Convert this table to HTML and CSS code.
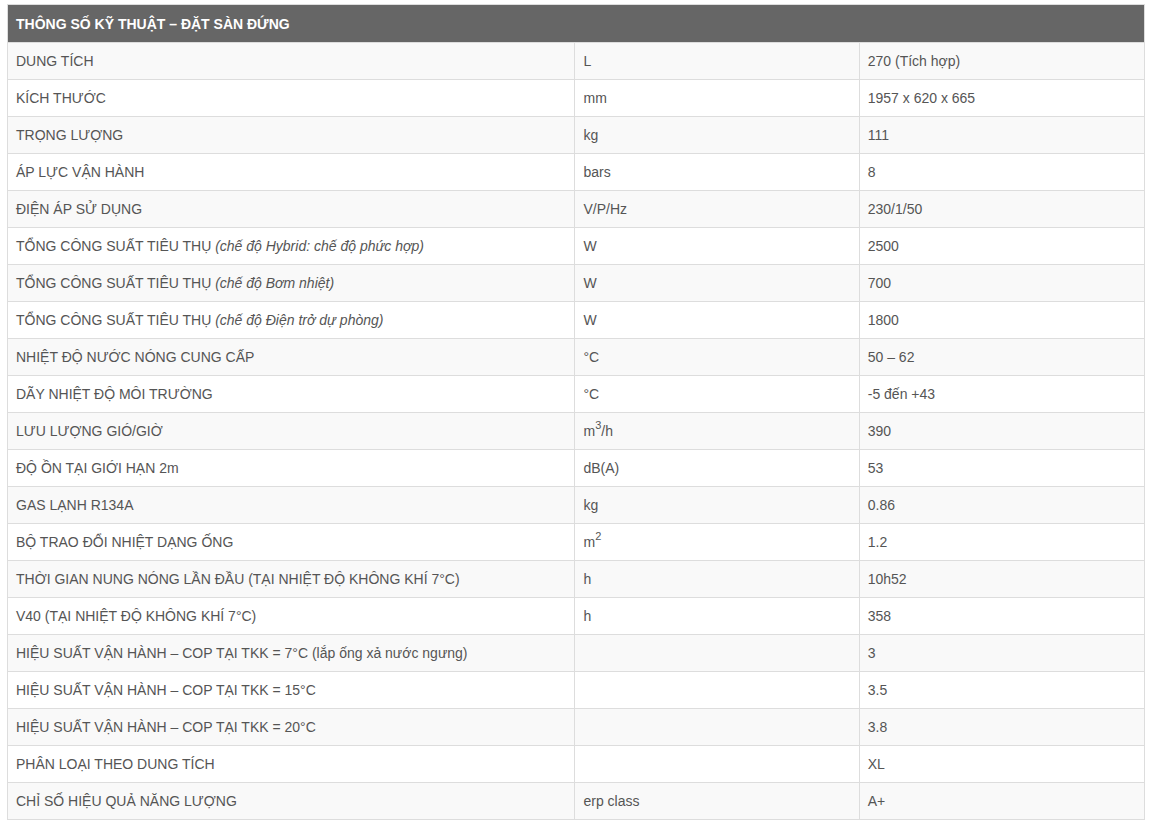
FILE: index.html
```html
<!DOCTYPE html>
<html lang="vi">
<head>
<meta charset="utf-8">
<title>Thông số kỹ thuật</title>
<link rel="stylesheet" href="styles.css">
</head>
<body>
<table class="spec">
  <colgroup>
    <col class="c1"><col class="c2"><col class="c3">
  </colgroup>
  <thead>
    <tr><th colspan="3">THÔNG SỐ KỸ THUẬT – ĐẶT SÀN ĐỨNG</th></tr>
  </thead>
  <tbody>
    <tr><td>DUNG TÍCH</td><td>L</td><td>270 (Tích hợp)</td></tr>
    <tr><td>KÍCH THƯỚC</td><td>mm</td><td>1957 x 620 x 665</td></tr>
    <tr><td>TRỌNG LƯỢNG</td><td>kg</td><td>111</td></tr>
    <tr><td>ÁP LỰC VẬN HÀNH</td><td>bars</td><td>8</td></tr>
    <tr><td>ĐIỆN ÁP SỬ DỤNG</td><td>V/P/Hz</td><td>230/1/50</td></tr>
    <tr><td>TỔNG CÔNG SUẤT TIÊU THỤ <em>(chế độ Hybrid: chế độ phức hợp)</em></td><td>W</td><td>2500</td></tr>
    <tr><td>TỔNG CÔNG SUẤT TIÊU THỤ <em>(chế độ Bơm nhiệt)</em></td><td>W</td><td>700</td></tr>
    <tr><td>TỔNG CÔNG SUẤT TIÊU THỤ <em>(chế độ Điện trở dự phòng)</em></td><td>W</td><td>1800</td></tr>
    <tr><td>NHIỆT ĐỘ NƯỚC NÓNG CUNG CẤP</td><td>°C</td><td>50 – 62</td></tr>
    <tr><td>DÃY NHIỆT ĐỘ MÔI TRƯỜNG</td><td>°C</td><td>-5 đến +43</td></tr>
    <tr><td>LƯU LƯỢNG GIÓ/GIỜ</td><td>m<sup>3</sup>/h</td><td>390</td></tr>
    <tr><td>ĐỘ ỒN TẠI GIỚI HẠN 2m</td><td>dB(A)</td><td>53</td></tr>
    <tr><td>GAS LẠNH R134A</td><td>kg</td><td>0.86</td></tr>
    <tr><td>BỘ TRAO ĐỔI NHIỆT DẠNG ỐNG</td><td>m<sup>2</sup></td><td>1.2</td></tr>
    <tr><td>THỜI GIAN NUNG NÓNG LẦN ĐẦU (TẠI NHIỆT ĐỘ KHÔNG KHÍ 7°C)</td><td>h</td><td>10h52</td></tr>
    <tr><td>V40 (TẠI NHIỆT ĐỘ KHÔNG KHÍ 7°C)</td><td>h</td><td>358</td></tr>
    <tr><td>HIỆU SUẤT VẬN HÀNH – COP TẠI TKK = 7°C (lắp ống xả nước ngưng)</td><td></td><td>3</td></tr>
    <tr><td>HIỆU SUẤT VẬN HÀNH – COP TẠI TKK = 15°C</td><td></td><td>3.5</td></tr>
    <tr><td>HIỆU SUẤT VẬN HÀNH – COP TẠI TKK = 20°C</td><td></td><td>3.8</td></tr>
    <tr><td>PHÂN LOẠI THEO DUNG TÍCH</td><td></td><td>XL</td></tr>
    <tr><td>CHỈ SỐ HIỆU QUẢ NĂNG LƯỢNG</td><td>erp class</td><td>A+</td></tr>
  </tbody>
</table>
</body>
</html>
```

FILE: styles.css
```css
html, body {
  margin: 0;
  padding: 0;
  background: #ffffff;
}
body {
  padding: 4px 7px 0 7px;
  font-family: "Liberation Sans", Arial, sans-serif;
  font-size: 14px;
  color: #555555;
}
.spec {
  width: 1138px;
  border-collapse: collapse;
  border: 1px solid #dddddd;
  table-layout: fixed;
}
.spec col.c1 { width: 567px; }
.spec col.c2 { width: 284px; }
.spec col.c3 { width: 285px; }
.spec th {
  background: #666666;
  color: #ffffff;
  font-weight: bold;
  text-align: left;
  height: 38px;
  padding: 0 8px;
  box-sizing: border-box;
  border: 1px solid #dddddd;
  font-size: 14px;
}
.spec td {
  height: 37px;
  padding: 0 8px;
  box-sizing: border-box;
  border: 1px solid #dddddd;
  vertical-align: middle;
  line-height: 20px;
  white-space: nowrap;
}
.spec tbody tr:nth-child(odd) td {
  background: #f9f9f9;
}
.spec tbody tr:nth-child(even) td {
  background: #ffffff;
}
.spec em {
  font-style: italic;
}
.spec sup {
  font-size: 11px;
  line-height: 0;
  vertical-align: 7px;
}
```
